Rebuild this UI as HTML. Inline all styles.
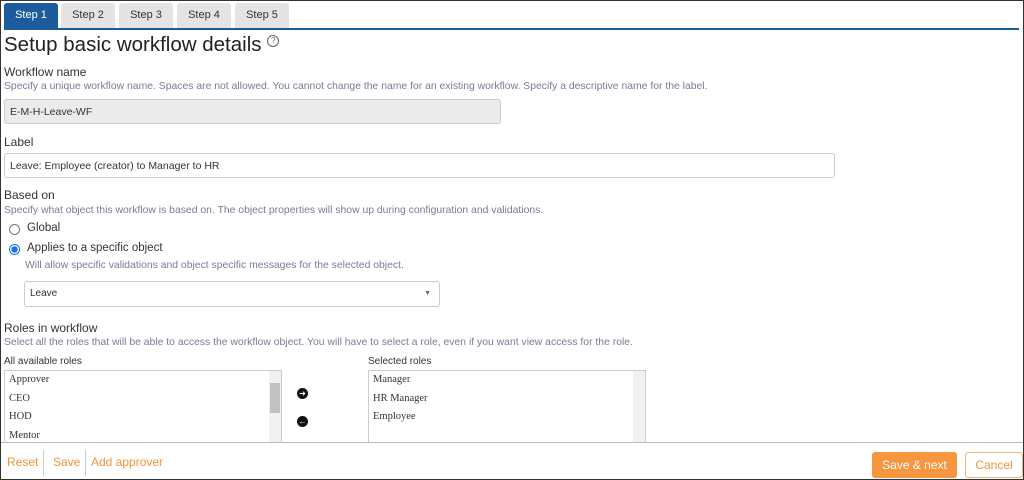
<!DOCTYPE html><html><head><style>
body{margin:0;width:1024px;height:480px;overflow:hidden;font-family:"Liberation Sans",sans-serif;background:#fff;position:relative}
.frame{position:absolute;left:0;top:0;width:1022px;height:478px;border:1px solid #333}
.a{position:absolute;white-space:nowrap}
.tab{position:absolute;top:3px;height:25px;width:54px;background:#e4e4e4;border-radius:3px 3px 0 0;font-size:11px;color:#333;text-align:center;line-height:25px}
.lbl{font-size:12px;color:#333}
.hint{font-size:10.4px;color:#7a7a98}
.inp{position:absolute;border:1px solid #ccc;border-radius:3px;font-size:10.5px;color:#333;line-height:24px;padding-left:5px;box-sizing:border-box;height:25px}
.list{position:absolute;border:1px solid #ccc;border-bottom:none;font-family:"Liberation Serif",serif;font-size:10.5px;color:#333}
.list div{height:18.5px;line-height:18px;padding-left:4px}
.sb{position:absolute;right:0;top:0;width:12px;bottom:0;background:#f1f1f1}
</style></head><body>
<div class="frame"></div>
<div class="tab" style="left:4px;background:#1d5c9c;color:#fff">Step 1</div>
<div class="tab" style="left:61px">Step 2</div>
<div class="tab" style="left:119px">Step 3</div>
<div class="tab" style="left:177px">Step 4</div>
<div class="tab" style="left:235px">Step 5</div>
<div class="a" style="left:4px;top:28px;width:1015px;height:2px;background:#1d5c9c"></div>
<div class="a" style="left:4px;top:33px;font-size:20.5px;color:#222">Setup basic workflow details <span style="display:inline-block;width:10px;height:10px;border:1px solid #666;border-radius:50%;font-size:8px;line-height:10px;text-align:center;vertical-align:8px;color:#666">?</span></div>
<div class="a lbl" style="left:4px;top:65px">Workflow name</div>
<div class="a hint" style="left:4px;top:81px">Specify a unique workflow name. Spaces are not allowed. You cannot change the name for an existing workflow. Specify a descriptive name for the label.</div>
<div class="inp" style="left:4px;top:99px;width:497px;background:#ebebeb">E-M-H-Leave-WF</div>
<div class="a lbl" style="left:4px;top:135px">Label</div>
<div class="inp" style="left:4px;top:153px;width:831px">Leave: Employee (creator) to Manager to HR</div>
<div class="a lbl" style="left:4px;top:188px">Based on</div>
<div class="a hint" style="left:4px;top:205px">Specify what object this workflow is based on. The object properties will show up during configuration and validations.</div>
<div class="a" style="left:9px;top:224px;width:9px;height:9px;border:1px solid #777;border-radius:50%"></div>
<div class="a lbl" style="left:27px;top:222px;font-size:11.5px">Global</div>
<div class="a" style="left:9px;top:244px;width:9px;height:9px;border:1px solid #1a73e8;border-radius:50%;background:radial-gradient(#1a73e8 45%,#fff 55%)"></div>
<div class="a lbl" style="left:27px;top:242px;font-size:11.5px">Applies to a specific object</div>
<div class="a hint" style="left:25px;top:260px">Will allow specific validations and object specific messages for the selected object.</div>
<div class="inp" style="left:24px;top:281px;width:416px;height:26px;font-size:10px">Leave<span style="position:absolute;right:8px;top:0;font-size:7px;color:#666">▼</span></div>
<div class="a lbl" style="left:4px;top:321px">Roles in workflow</div>
<div class="a hint" style="left:4px;top:337px">Select all the roles that will be able to access the workflow object. You will have to select a role, even if you want view access for the role.</div>
<div class="a" style="left:4px;top:356px;font-size:10px;color:#333">All available roles</div>
<div class="a" style="left:368px;top:356px;font-size:10px;color:#333">Selected roles</div>
<div class="list" style="left:4px;top:370px;width:276px;height:72px"><div>Approver</div><div>CEO</div><div>HOD</div><div>Mentor</div><span class="sb"><span style="position:absolute;left:1px;top:12px;width:10px;height:30px;background:#c1c1c1"></span></span></div>
<div class="list" style="left:368px;top:370px;width:276px;height:72px"><div>Manager</div><div>HR Manager</div><div>Employee</div><span class="sb"></span></div>
<div class="a" style="left:297px;top:388px;width:11px;height:11px;border-radius:50%;background:#111;color:#fff;font-size:8px;line-height:11px;text-align:center">➜</div>
<div class="a" style="left:297px;top:416px;width:11px;height:11px;border-radius:50%;background:#111;color:#fff;font-size:8px;line-height:11px;text-align:center">←</div>
<div class="a" style="left:1px;top:442px;width:1022px;height:1px;background:#bbb"></div>
<div class="a" style="left:7px;top:455px;font-size:12px;color:#f7923a">Reset</div>
<div class="a" style="left:43px;top:450px;width:1px;height:26px;background:#ccc"></div>
<div class="a" style="left:53px;top:455px;font-size:12px;color:#f7923a">Save</div>
<div class="a" style="left:85px;top:450px;width:1px;height:26px;background:#ccc"></div>
<div class="a" style="left:91px;top:455px;font-size:12px;color:#f7923a">Add approver</div>
<div class="a" style="left:872px;top:452px;width:85px;height:26px;background:#f7963f;border-radius:3px;color:#fff;font-size:12px;line-height:26px;text-align:center">Save &amp; next</div>
<div class="a" style="left:965px;top:452px;width:58px;height:26px;border:1px solid #f7b27a;box-sizing:border-box;border-radius:3px;color:#f7923a;font-size:12px;line-height:24px;text-align:center">Cancel</div>
</body></html>
